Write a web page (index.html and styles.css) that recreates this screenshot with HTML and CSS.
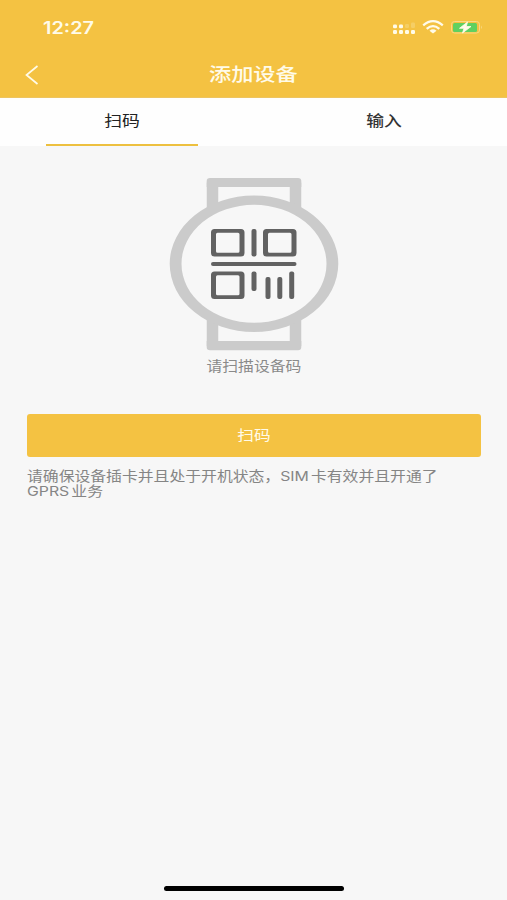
FILE: index.html
```html
<!DOCTYPE html>
<html lang="zh-CN">
<head>
<meta charset="utf-8">
<title>添加设备</title>
<link rel="stylesheet" href="styles.css">
</head>
<body>
<div class="screen">
  <header class="header">
    <div class="status">
      <span class="time">12:27</span>
      <svg class="status-icons" width="92" height="18" viewBox="0 0 92 18">
        <g fill="#fffbe9">
          <rect x="3" y="6.500" width="4" height="3.800" rx="1.2"/><rect x="9" y="6.500" width="4" height="3.800" rx="1.2"/>
          <rect x="3" y="12" width="4" height="4" rx="1.2"/><rect x="9" y="12" width="4" height="4" rx="1.2"/><rect x="15" y="12" width="4" height="4" rx="1.2"/><rect x="21" y="12" width="4" height="4" rx="1.2"/>
        </g>
        <g fill="#f5ce65"><rect x="15" y="6" width="4" height="4" rx="1.2"/><rect x="21" y="4.500" width="4" height="5.500" rx="1.2"/></g>
        <g fill="none" stroke="#fffbe9" stroke-width="2.3">
          <path d="M33.2 7.3Q43 -1 52.8 7.3"/>
          <path d="M36.7 10.9Q43 5.400 49.3 10.9"/>
        </g>
        <path d="M39.5 12.7Q43 10 46.5 12.7L43 15.6Z" fill="#fffbe9"/>
        <rect x="61.5" y="3.5" width="28" height="11.5" rx="3" fill="none" stroke="#f8d987"/>
        <path d="M91 7.500Q92.500 9.200 91 11Z" fill="#f8d987"/>
        <rect x="63" y="5" width="24" height="9" rx="1.5" fill="#5fd060"/>
        <path d="M77.500 4L69.500 10.300H74L72.500 15L81 8.500H76.300Z" fill="#fffbe9" stroke="#fffbe9" stroke-width=".8"/>
      </svg>
    </div>
    <div class="nav">
      <svg class="back" width="14" height="20" viewBox="0 0 14 20"><path d="M12.500 1L1.500 10L12.500 19" fill="none" stroke="#fffbe9" stroke-width="1.700"/></svg>
      <h1 class="title"><span class="wide">添加设备</span></h1>
    </div>
  </header>
  <nav class="tabs">
    <div class="tab active"><span class="wide">扫码</span></div>
    <div class="tab"><span class="wide">输入</span></div>
  </nav>
  <main class="content">
    <svg class="watch" width="170" height="174" viewBox="169 177 170 174">
      <g fill="none" stroke="#cbcbcb">
        <path d="M212.500 210V182.500" stroke-width="11.500"/>
        <path d="M295.500 210V182.500" stroke-width="11.500"/>
        <path d="M212.500 318V346" stroke-width="11.500"/>
        <path d="M295.500 318V346" stroke-width="11.500"/>
      </g>
      <g fill="#cbcbcb">
        <path d="M206.700 187V181Q206.700 178 210 178H298Q301.300 178 301.300 181V187Z"/>
        <path d="M206.700 341V347Q206.700 350.300 210 350.300H298Q301.300 350.300 301.300 347V341Z"/>
        <path fill-rule="evenodd" d="M169.700 263.800A84.300 68.300 0 0 1 338.300 263.800A84.300 68.300 0 0 1 169.700 263.800ZM181.500 263.800A72.500 59 0 0 0 326.500 263.800A72.500 59 0 0 0 181.500 263.800Z"/>
      </g>
      <g fill="#626262">
        <path fill-rule="evenodd" d="M214.500 229H241Q244.500 229 244.500 232.500V253Q244.500 256.500 241 256.500H214.500Q211 256.500 211 253V232.500Q211 229 214.500 229ZM217.500 232.700Q216 232.700 216 234.200V251.300Q216 252.800 217.500 252.800H238Q239.500 252.800 239.500 251.300V234.200Q239.500 232.700 238 232.700Z"/>
        <path fill-rule="evenodd" d="M266.500 229H293Q296.500 229 296.500 232.500V253Q296.500 256.500 293 256.500H266.500Q263 256.500 263 253V232.500Q263 229 266.500 229ZM269.500 232.700Q268 232.700 268 234.200V251.300Q268 252.800 269.500 252.800H290Q291.500 252.800 291.500 251.300V234.200Q291.500 232.700 290 232.700Z"/>
        <path fill-rule="evenodd" d="M214.500 271.500H241Q244.500 271.500 244.500 275V295.500Q244.500 299 241 299H214.500Q211 299 211 295.500V275Q211 271.500 214.500 271.500ZM217.500 275.200Q216 275.200 216 276.700V293.800Q216 295.300 217.500 295.300H238Q239.500 295.300 239.500 293.800V276.700Q239.500 275.200 238 275.200Z"/>
        <rect x="251.500" y="229" width="5" height="27.500" rx="2"/>
        <rect x="211" y="262" width="85.500" height="4" rx="2"/>
        <rect x="251.500" y="271.500" width="5" height="19.500" rx="2"/>
        <rect x="265.500" y="277" width="5" height="22" rx="2"/>
        <rect x="277.300" y="277" width="5" height="22" rx="2"/>
        <rect x="289.200" y="271.500" width="5" height="27.500" rx="2"/>
      </g>
    </svg>
    <p class="hint"><span class="wide">请扫描设备码</span></p>
    <button class="scan"><span class="wide">扫码</span></button>
    <p class="tips">请确保设备插卡并且处于开机状态，SIM 卡有效并且开通了<br>GPRS 业务</p>
  </main>
  <div class="home-bar"></div>
</div>
</body>
</html>
```
FILE: styles.css
```css
* { box-sizing: border-box; margin: 0; padding: 0; }
body { background: #f7f7f7; font-family: Inter, "Noto Sans CJK SC", sans-serif; }
.screen { width: 507px; height: 900px; display: flex; flex-direction: column; overflow: hidden; }
.wide { display: inline-block; transform: scaleX(1.19); }
.header { height: 98px; background: #f4c242; color: #fffbe9; border-bottom: 1px solid #edc460; }
.status { height: 52px; display: flex; justify-content: space-between; padding: 18px 25px 0 43px; }
.time { padding-top: 1px; font-size: 17px; line-height: 19px; font-weight: 600; transform: scaleX(1.17); transform-origin: left; }
.status-icons { flex: none; }
.nav { height: 45px; display: grid; grid-template-columns: 60px 1fr 60px; align-items: center; }
.back { margin-left: 25px; }
.title { font-size: 18.700px; line-height: 24px; font-weight: 500; text-align: center; }
.tabs { height: 48px; background: #fefefe; display: grid; grid-template-columns: 244px 1fr; color: #333; font-size: 15px; line-height: 22px; text-align: center; }
.tab { padding-top: 12px; font-weight: 500; }
.tab:last-child { padding-left: 18px; }
.active { width: 152px; margin-left: 46px; border-bottom: 2.500px solid #edc03f; font-weight: 400; color: #222; }
.content { flex: 1; padding: 31px 26px 0 27px; display: flex; flex-direction: column; }
.watch { align-self: center; }
.hint { margin-top: 5px; font-size: 13.300px; line-height: 20px; text-align: center; color: #8a8a8a; }
.scan { margin-top: 38px; height: 43px; flex: none; padding-bottom: 2px; border: 0; border-radius: 3px; background: #f4c242; color: #fffbe9; font: 400 14px/20px Inter, "Noto Sans CJK SC", sans-serif; }
.tips { margin-top: 12px; width: 380px; white-space: nowrap; font-size: 13.300px; line-height: 15px; word-spacing: -2px; color: #858585; transform: scaleX(1.19); transform-origin: left; }
.home-bar { width: 180px; height: 5px; margin: 0 auto 9px; border-radius: 3px; background: #000; }
```
